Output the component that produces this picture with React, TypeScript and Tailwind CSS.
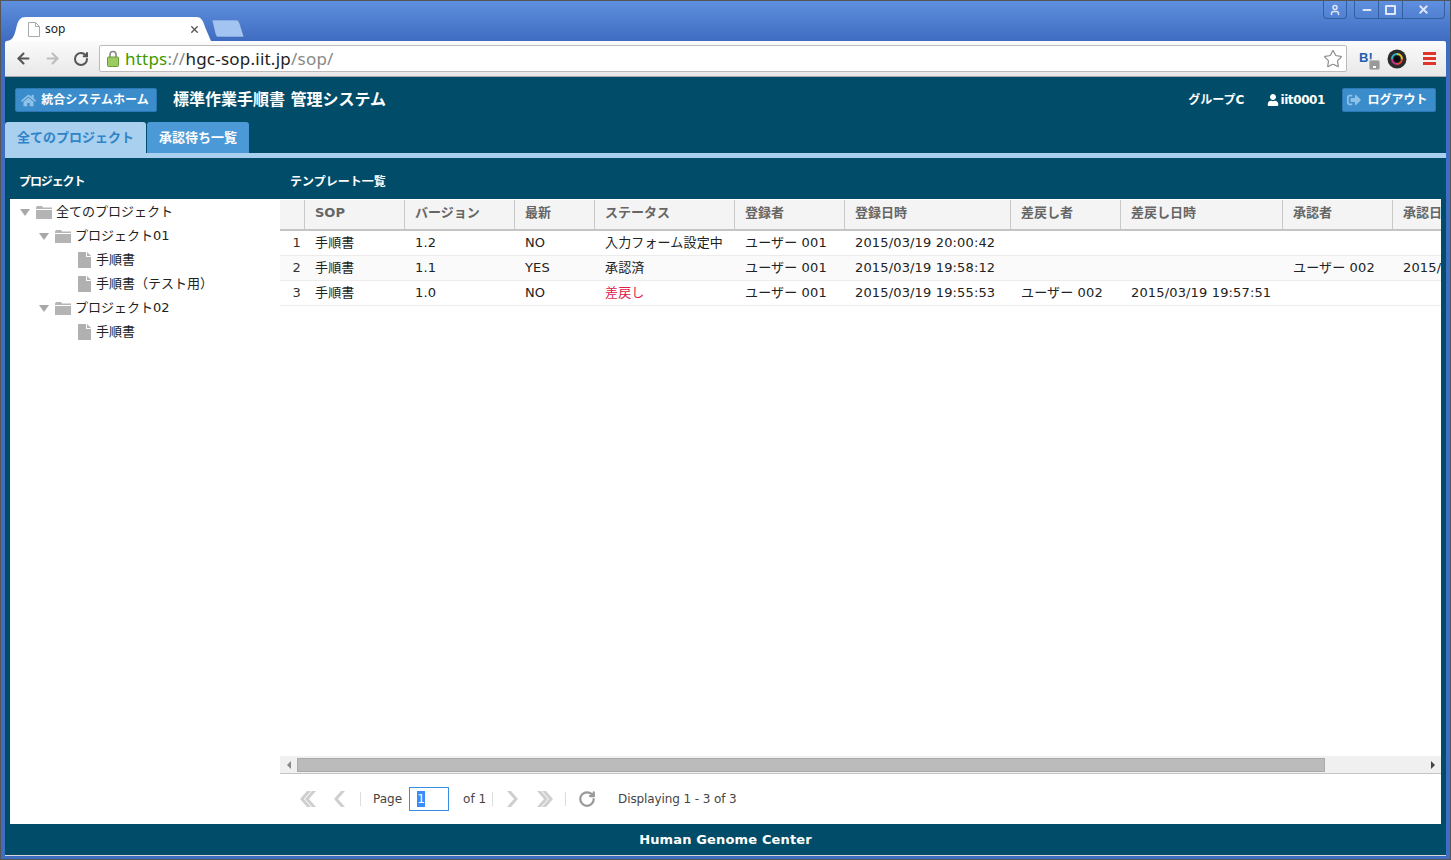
import { ArrowLeft, ArrowRight, RotateCw, Star, User, Minus, X } from "lucide-react";
import { FaHome, FaUser, FaSignOutAlt } from "react-icons/fa";

const font = { fontFamily: '"DejaVu Sans", "Noto Sans CJK JP", sans-serif' };

const columns = [
  { label: "", w: "w-[25px]" },
  { label: "SOP", w: "w-[100px]" },
  { label: "バージョン", w: "w-[110px]" },
  { label: "最新", w: "w-[80px]" },
  { label: "ステータス", w: "w-[140px]" },
  { label: "登録者", w: "w-[110px]" },
  { label: "登録日時", w: "w-[166px]" },
  { label: "差戻し者", w: "w-[110px]" },
  { label: "差戻し日時", w: "w-[162px]" },
  { label: "承認者", w: "w-[110px]" },
  { label: "承認日時", w: "w-[166px]" },
];

const rows = [
  ["1", "手順書", "1.2", "NO", "入力フォーム設定中", "ユーザー 001", "2015/03/19 20:00:42", "", "", "", ""],
  ["2", "手順書", "1.1", "YES", "承認済", "ユーザー 001", "2015/03/19 19:58:12", "", "", "ユーザー 002", "2015/03/19 19:59:30"],
  ["3", "手順書", "1.0", "NO", "差戻し", "ユーザー 001", "2015/03/19 19:55:53", "ユーザー 002", "2015/03/19 19:57:51", "", ""],
];

function Caret() {
  return <span className="w-0 h-0 border-x-[5px] border-x-transparent border-t-[7px] border-t-[#a8a8a8] mr-[6px]" />;
}

function Folder() {
  return (
    <svg width="16" height="13" viewBox="0 0 16 13" className="mr-[4px]">
      <path d="M0 1.5 L1 0 H6 L7 1.5 H16 V3 H0 Z" fill="#b4b4b4" />
      <rect x="0" y="4" width="16" height="9" fill="#b4b4b4" />
    </svg>
  );
}

function FileIcon() {
  return (
    <svg width="13" height="16" viewBox="0 0 13 16" className="mr-[5px]">
      <path d="M0 0 H8 V5 H13 V16 H0 Z M9 0 L13 4 H9 Z" fill="#b0b0b0" />
    </svg>
  );
}

function TreeRow({ level, kind, label }: { level: number; kind: "folder" | "file"; label: string }) {
  return (
    <div className={`h-6 flex items-center ${level === 0 ? "pl-[10px]" : level === 1 ? "pl-[29px]" : "pl-[68px]"}`}>
      {kind === "folder" ? <Caret /> : null}
      {kind === "folder" ? <Folder /> : <FileIcon />}
      <span className="text-[13px] text-[#222]">{label}</span>
    </div>
  );
}

function Chevrons({ dir, double, className }: { dir: "left" | "right"; double?: boolean; className?: string }) {
  const w = double ? 16 : 11;
  return (
    <svg width={w} height="16" viewBox={`0 0 ${w} 16`} className={className}>
      <g transform={dir === "right" ? `translate(${w} 0) scale(-1 1)` : undefined} fill="#cfcfcf">
        <path d="M11 0 L4 8 L11 16 H7 L0 8 L7 0 Z" />
        {double ? <path d="M16 0 L9 8 L16 16 H12 L5 8 L12 0 Z" /> : null}
      </g>
    </svg>
  );
}

export default function App() {
  return (
    <div style={font} className="w-[1451px] h-[860px] overflow-hidden flex flex-col border border-[#555] border-b-0 bg-[#3f6dc1]">
      {/* window title bar + tabs */}
      <div className="h-[40px] shrink-0 flex justify-between px-1 bg-gradient-to-b from-[#5f8fdf] to-[#3f6cc0]">
        <div className="flex items-end pl-[1px]">
          <div className="relative w-[206px] h-[24px]">
            <svg width="206" height="24" viewBox="0 0 206 24" className="absolute inset-0">
              <path d="M0 24 C6 24 8 20 10 12 C12 3 14 0 20 0 H190 C195 0 197 3 199 10 L205 24 Z" fill="#ffffff" />
            </svg>
            <div className="relative h-full flex items-center pl-[22px] pr-[12px]">
              <svg width="12" height="15" viewBox="0 0 12 15" className="mr-[5px]">
                <path d="M0.5 0.5 H7.5 L11.5 4.5 V14.5 H0.5 Z M7.5 0.5 V4.5 H11.5" fill="#fff" stroke="#aaa" />
              </svg>
              <span className="text-[12px] text-[#222] flex-1" style={{ fontFamily: '"Noto Sans", sans-serif' }}>sop</span>
              <X size={11} strokeWidth={3} className="text-[#555]" />
            </div>
          </div>
          <svg width="32" height="18" viewBox="0 0 32 18" className="mb-[3px]">
            <path d="M0 0 H24 C27 0 27 2 28 4 L32 17 H6 C4 17 4 15 3 13 Z" fill="#a3c4f1" stroke="#3b66ad" strokeWidth="0.5" />
          </svg>
        </div>
        <div className="flex items-start gap-[7px] pr-[1px]">
          <div className="w-[24px] h-[18px] flex items-center justify-center border border-t-0 border-[#345f9f] rounded-b-[4px] text-[#dfe6f5]">
            <User size={12} strokeWidth={3} />
          </div>
          <div className="h-[18px] flex border border-t-0 border-[#345f9f] rounded-b-[4px] text-[#dfe6f5]">
            <div className="w-[24px] flex items-center justify-center border-r border-[#345f9f]"><Minus size={12} strokeWidth={4} /></div>
            <div className="w-[24px] flex items-center justify-center border-r border-[#345f9f]"><span className="w-[11px] h-[10px] border-2 border-[#dfe6f5] rounded-[1px]" /></div>
            <div className="w-[41px] flex items-center justify-center"><X size={13} strokeWidth={3.5} /></div>
          </div>
        </div>
      </div>

      <div className="flex-1 flex flex-col px-1">
        {/* chrome toolbar */}
        <div className="h-[36px] shrink-0 flex items-center pl-[10px] pr-[10px] rounded-t-[2px] bg-gradient-to-b from-[#fbfbfb] to-[#e8e8e8] border-b border-[#a9a9a9]">
          <ArrowLeft size={17} strokeWidth={3} className="text-[#555]" />
          <ArrowRight size={17} strokeWidth={3} className="text-[#bdbdbd] ml-[12px]" />
          <RotateCw size={16} strokeWidth={3} className="text-[#555] ml-[12px]" />
          <div className="ml-[10px] w-[1249px] h-[27px] flex items-center bg-white border border-[#bbb] rounded-[2px] pl-[7px] pr-[3px]">
            <svg width="12" height="17" viewBox="0 0 12 17" className="mr-[6px]">
              <path d="M3 7 V4.5 A3 3 0 0 1 9 4.5 V7" fill="none" stroke="#888" strokeWidth="1.6" />
              <rect x="0.5" y="7" width="11" height="9.5" rx="1" fill="#9ccb62" stroke="#6d9a3a" />
            </svg>
            <span className="text-[17px] flex-1 tracking-[0.23px]" style={{ fontFamily: '"Noto Sans", sans-serif' }}>
              <span className="text-[#3a9a00]">https</span>
              <span className="text-[#888]">://</span>
              <span className="text-[#222]">hgc-sop.iit.jp</span>
              <span className="text-[#888]">/sop/</span>
            </span>
            <Star size={20} strokeWidth={1.4} className="text-[#8a8a8a]" />
          </div>
          <div className="relative ml-[12px] w-[20px] h-[24px]">
            <span className="text-[13px] font-bold text-[#1f5fb0] leading-none absolute left-0 top-[4px]" style={{ fontFamily: '"Liberation Sans", sans-serif' }}>B!</span>
            <span className="absolute left-[10px] top-[13px] w-[11px] h-[10px] rounded-[2px] bg-[#999] border border-[#bbb] flex items-end justify-center pb-px">
              <span className="w-[3px] h-[2px] bg-white" />
            </span>
          </div>
          <svg width="20" height="20" viewBox="0 0 20 20" className="ml-[8px]">
            <circle cx="10" cy="10" r="9.5" fill="#2b2b2b" />
            <path d="M10 5 A5 5 0 0 1 15 10" fill="none" stroke="#e8c92a" strokeWidth="2" />
            <path d="M15 10 A5 5 0 0 1 10 15" fill="none" stroke="#e8452a" strokeWidth="2" />
            <path d="M10 15 A5 5 0 0 1 5 10" fill="none" stroke="#c8308a" strokeWidth="2" />
            <path d="M5 10 A5 5 0 0 1 10 5" fill="none" stroke="#2ab4c8" strokeWidth="2" />
            <circle cx="10" cy="10" r="3" fill="#0b0b0b" />
          </svg>
          <div className="ml-[16px] flex flex-col gap-[2px]">
            <span className="w-[13px] h-[3px] bg-[#e0352b]" />
            <span className="w-[13px] h-[3px] bg-[#e0352b]" />
            <span className="w-[13px] h-[3px] bg-[#e0352b]" />
          </div>
        </div>

        {/* page */}
        <div className="h-[778px] shrink-0 flex flex-col bg-[#014d69]">
          {/* header */}
          <div className="h-[45px] shrink-0 flex items-center pl-[10px] pr-[10px] pt-[1px]">
            <button className="h-[24px] w-[142px] flex items-center justify-center gap-[5px] pr-[2px] rounded-[2px] bg-[#3b8ccb] border border-[#2d78b4] text-white text-[12px] font-bold">
              <FaHome className="text-[#8fc0e8] text-[15px]" />
              統合システムホーム
            </button>
            <h1 className="ml-[16px] text-[16px] font-bold text-white">標準作業手順書 管理システム</h1>
            <div className="ml-auto flex items-center text-[12px] font-bold text-white">
              <span>グループC</span>
              <FaUser className="ml-[23px] mr-[1px] text-[12px]" />
              <span className="tracking-[-0.4px]">iit0001</span>
              <button className="ml-[17px] h-[24px] w-[94px] flex items-center justify-center gap-[6px] pr-[3px] rounded-[2px] bg-[#3b8ccb] border border-[#2d78b4] text-white text-[12px] font-bold">
                <FaSignOutAlt className="text-[#8fc0e8] text-[14px]" />
                ログアウト
              </button>
            </div>
          </div>

          {/* tabs */}
          <div className="h-[31px] shrink-0 flex gap-px text-[13px] font-bold">
            <div className="w-[141px] flex items-center justify-center rounded-t-[3px] bg-[#a9d0ee] text-[#2f84c8]">全てのプロジェクト</div>
            <div className="w-[102px] flex items-center justify-center rounded-t-[3px] bg-[#4b9ad7] text-white">承認待ち一覧</div>
          </div>
          <div className="h-[5px] shrink-0 bg-[#a9d0ee]" />

          {/* panel titles */}
          <div className="h-[41px] shrink-0 flex items-center text-[12px] font-bold text-white pt-[7px]">
            <div className="w-[285px] pl-[14px] tracking-[-1.1px]">プロジェクト</div>
            <div>テンプレート一覧</div>
          </div>

          {/* panels */}
          <div className="h-[625px] shrink-0 mx-[5px] flex bg-white">
            <div className="w-[270px] shrink-0 pt-[1px]">
              <TreeRow level={0} kind="folder" label="全てのプロジェクト" />
              <TreeRow level={1} kind="folder" label="プロジェクト01" />
              <TreeRow level={2} kind="file" label="手順書" />
              <TreeRow level={2} kind="file" label="手順書（テスト用）" />
              <TreeRow level={1} kind="folder" label="プロジェクト02" />
              <TreeRow level={2} kind="file" label="手順書" />
            </div>
            <div className="flex-1 min-w-0 flex flex-col">
              <div className="flex-1 min-h-0 overflow-hidden">
                <table className="table-fixed border-separate border-spacing-0 w-[1279px] mt-px">
                  <thead>
                    <tr className="h-[31px] bg-[#f4f4f4]">
                      {columns.map((c, i) => (
                        <th key={i} className={`${c.w} border-r border-b-2 border-r-[#c8c8c8] border-b-[#c4c4c4] pl-[10px] pb-[3px] text-left text-[13px] font-bold text-[#666] whitespace-nowrap last:border-r-0`}>{c.label}</th>
                      ))}
                    </tr>
                  </thead>
                  <tbody>
                    {rows.map((r, i) => (
                      <tr key={i} className={`h-[25px] ${i === 1 ? "bg-[#fafafa]" : "bg-white"}`}>
                        {r.map((v, j) => (
                          <td key={j} className={`text-[13px] tracking-[0.15px] border-b border-[#ececec] whitespace-nowrap overflow-hidden ${j === 0 ? "text-right pr-[4px] text-[#333]" : "pl-[10px]"} ${v === "差戻し" ? "text-[#e0204a]" : "text-[#222]"}`}>{v}</td>
                        ))}
                      </tr>
                    ))}
                  </tbody>
                </table>
              </div>

              {/* horizontal scrollbar */}
              <div className="h-[18px] shrink-0 flex items-center bg-[#f0f0f0] border-b border-[#c4c4c4]">
                <div className="w-[17px] flex justify-center"><span className="w-0 h-0 border-y-[4px] border-y-transparent border-r-[4px] border-r-[#888]" /></div>
                <div className="w-[1028px] h-[14px] bg-[#bbbbbb] border border-[#aaa]" />
                <div className="flex-1 flex justify-end pr-[6px]"><span className="w-0 h-0 border-y-[4px] border-y-transparent border-l-[4px] border-l-[#444]" /></div>
              </div>

              {/* pager */}
              <div className="h-[50px] shrink-0 flex items-center pl-[20px] text-[12px] text-[#444]">
                <Chevrons dir="left" double />
                <Chevrons dir="left" className="ml-[18px]" />
                <span className="ml-[15px] w-px h-[14px] bg-[#ddd]" />
                <span className="ml-[12px]">Page</span>
                <div className="ml-[7px] w-[40px] h-[24px] flex items-center pl-[7px] border border-[#3b8fe0]">
                  <span className="bg-[#3b8cff] text-white w-[8px] text-center leading-[16px]">1</span>
                </div>
                <span className="ml-[14px]">of 1</span>
                <span className="ml-[6px] w-px h-[14px] bg-[#ddd]" />
                <Chevrons dir="right" className="ml-[14px]" />
                <Chevrons dir="right" double className="ml-[19px]" />
                <span className="ml-[12px] w-px h-[14px] bg-[#ddd]" />
                <RotateCw size={18} strokeWidth={3} className="text-[#999] ml-[12px]" />
                <span className="ml-[22px] tracking-[-0.1px]">Displaying 1 - 3 of 3</span>
              </div>
            </div>
          </div>

          {/* footer */}
          <div className="flex-1 flex items-center justify-center text-[13px] font-bold tracking-[0.15px] text-white">Human Genome Center</div>
        </div>
        <div className="h-[1px] shrink-0 bg-[#d8d8d8]" />
      </div>
      <div className="h-[4px] shrink-0 border-b border-[#555]" />
    </div>
  );
}
